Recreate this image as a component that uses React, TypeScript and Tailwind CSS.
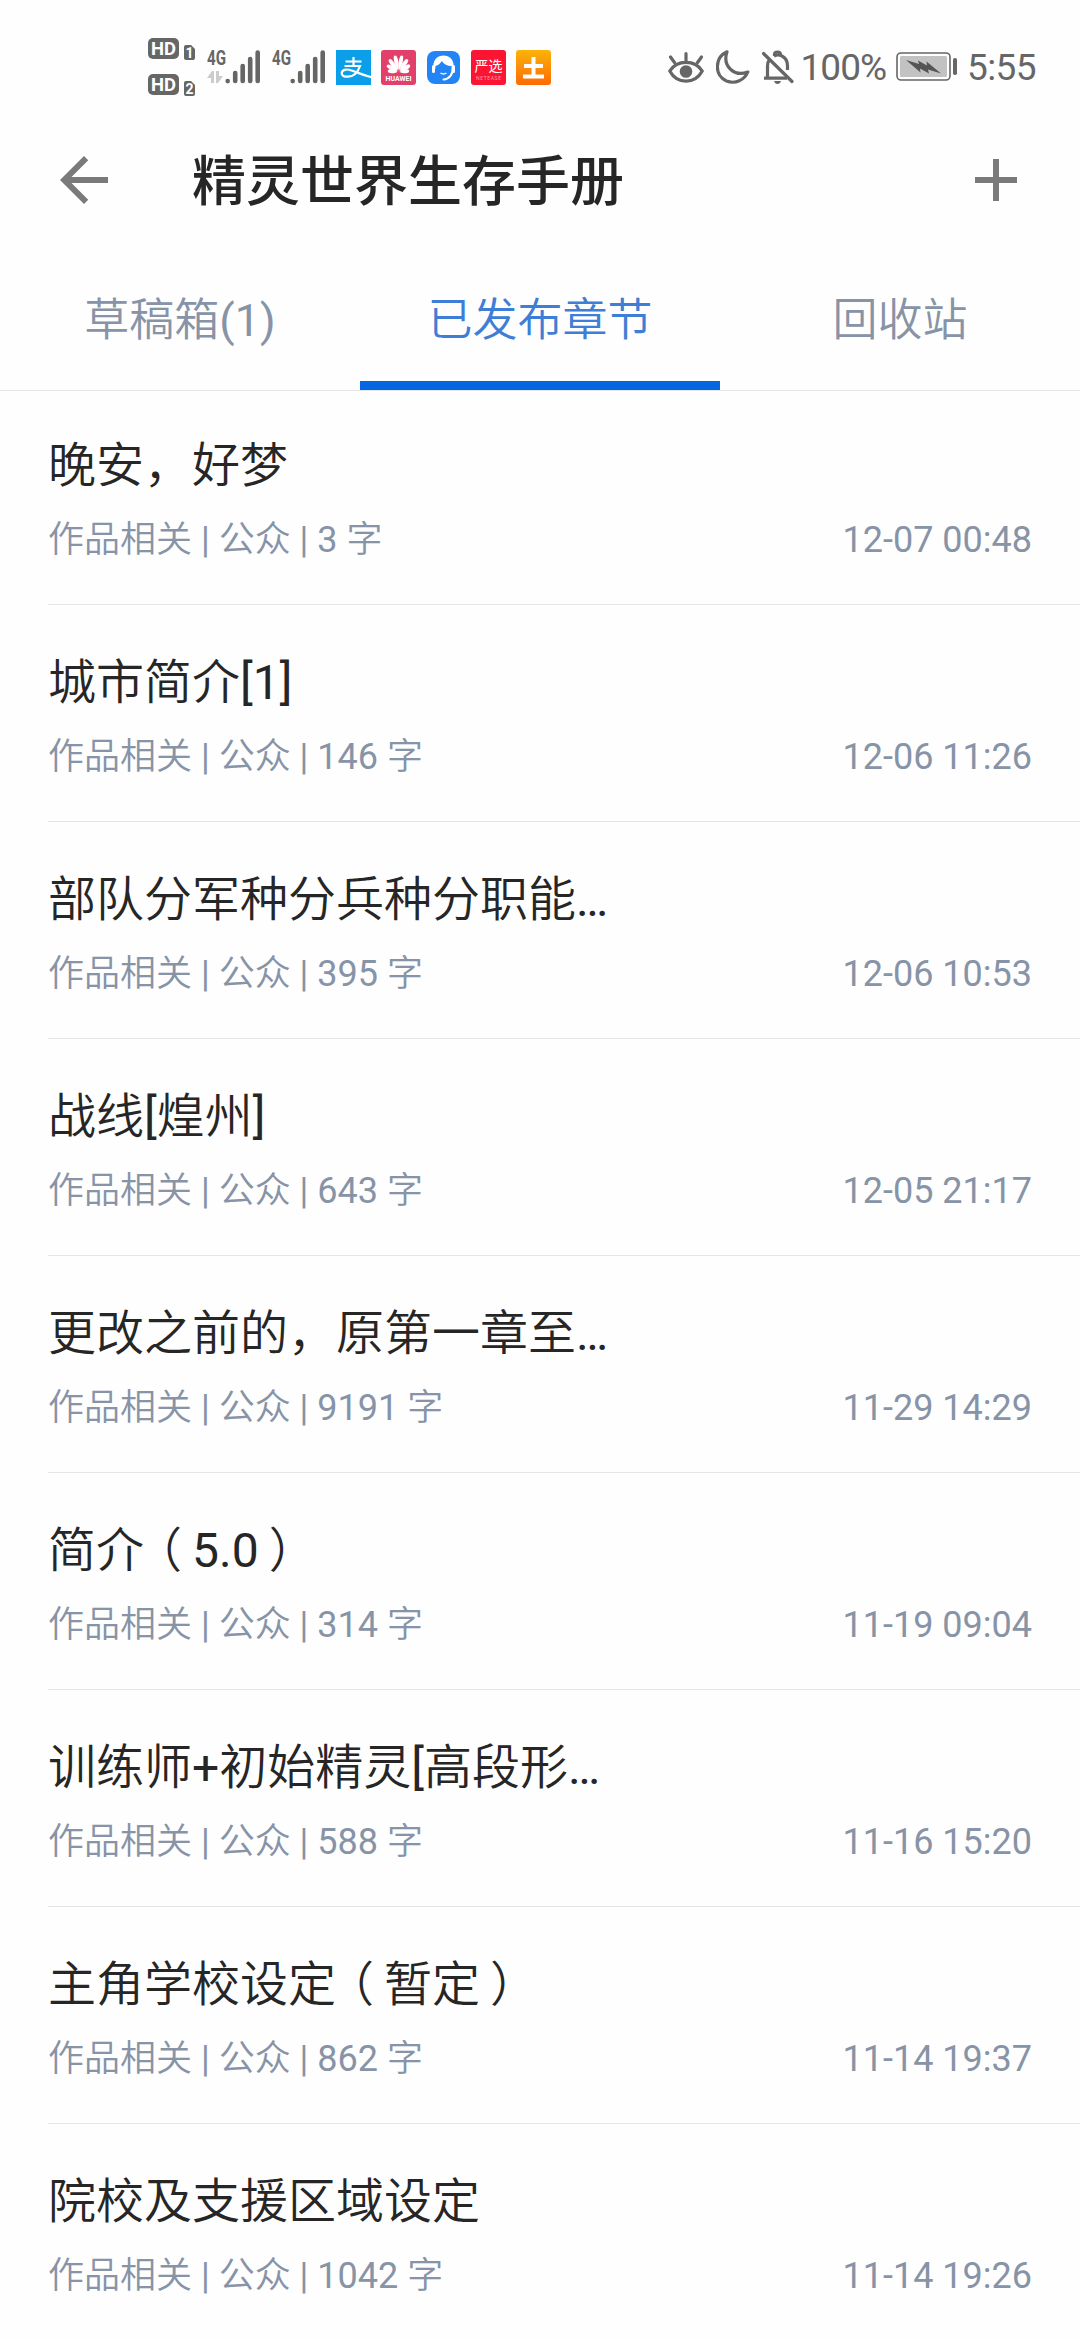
import type { ReactNode } from "react"

const chapters = [
  { title: "晚安，好梦", words: 3, date: "12-07 00:48" },
  { title: "城市简介[1]", words: 146, date: "12-06 11:26" },
  { title: "部队分军种分兵种分职能…", words: 395, date: "12-06 10:53" },
  { title: "战线[煌州]", words: 643, date: "12-05 21:17" },
  { title: "更改之前的，原第一章至…", words: 9191, date: "11-29 14:29" },
  { title: "简介（5.0）", words: 314, date: "11-19 09:04" },
  { title: "训练师+初始精灵[高段形…", words: 588, date: "11-16 15:20" },
  { title: "主角学校设定（暂定）", words: 862, date: "11-14 19:37" },
  { title: "院校及支援区域设定", words: 1042, date: "11-14 19:26" },
]

// angle and length of each petal
const petals = [[-84, 0.64], [-60, 0.8], [-36, 0.94], [-12, 1], [12, 1], [36, 0.94], [60, 0.8], [84, 0.64]]

function HdBadges() {
  return (
    <svg width="48" height="74" viewBox="0 -8 48 74" className="font-['Roboto',sans-serif] font-bold">
      {[0, 36].map((y, i) => (
        <g key={y}>
          <rect x="0" y={y} width="31" height="21" rx="5" fill="#666" />
          <text x="15.5" y={y + 17} fontSize="18" textAnchor="middle" textLength="25" lengthAdjust="spacingAndGlyphs" fill="#fff">HD</text>
          <path d={`M36 ${y + 9}q0-2 2-2h5l4 4v9q0 2-2 2h-7q-2 0-2-2z`} fill="#666" />
          <text x="41.5" y={y + 19.5} fontSize="14" textAnchor="middle" fill="#fff">{i + 1}</text>
        </g>
      ))}
    </svg>
  )
}

function Signal({ data }: { data?: boolean }) {
  return (
    <svg width="54" height="42" viewBox="0 -4 54 42" className="font-['Roboto',sans-serif] font-bold">
      <text x="0" y="15" fontSize="21" textLength="19" lengthAdjust="spacingAndGlyphs" fill="#666">4G</text>
      {data && <path d="M0 28l5-7h2v12H4v-5zM9 21h3v5h4l-5 7H9z" fill="#ccc" />}
      <g stroke="#666" strokeWidth="4.6" strokeLinecap="round">
        <path d="M20.7 31v0.1M28.2 23v8M35.7 16v15M43.2 9v22M50.7 2.6v28.4" />
      </g>
    </svg>
  )
}

function AppIcons() {
  return (
    <>
      {/* alipay */}
      <svg width="35" height="35" viewBox="0 0 35 35" className="ml-[10px]">
        <rect width="35" height="35" fill="#0a9fe8" />
        <path d="M9.500 11.500h16M17.500 7v8.500M8.500 16h15.500c-2 6-6 10.500-12 10.700-4 .2-6.300-1-6.300-3.400 0-3.600 5-4.600 9-3.100 6 2 12 4.800 20.800 7" fill="none" stroke="#fff" strokeWidth="2.200" />
      </svg>
      {/* huawei */}
      <svg width="35" height="35" viewBox="0 0 35 35" className="ml-[10px]">
        <rect width="35" height="35" rx="3" fill="#e2406a" />
        <g fill="#fff">
          {petals.map(([angle, size]) => (
            <path key={angle} d="M0-1.500C-2.200-6-3.200-12-1.700-16q1.500-1.500 3.200 0C3.200-12 2.200-6 0-1.500z" transform={`translate(17.500 22) rotate(${angle}) scale(.85 ${size})`} />
          ))}
          <text x="17.500" y="30.500" fontSize="6.500" textAnchor="middle" textLength="26" lengthAdjust="spacingAndGlyphs" className="font-['Roboto',sans-serif] font-bold">HUAWEI</text>
        </g>
      </svg>
      {/* support */}
      <svg width="33" height="33" viewBox="0 0 33 33" className="ml-[11px]">
        <rect width="33" height="33" rx="8" fill="#2384f5" />
        <path d="M8 15C7 2.500 26 2.500 25 15c-5 0-8-1.500-10-5C13 12.500 11 15 8 15z" fill="#fff" />
        <path d="M7.500 17C5.500 1.500 27.500 1.500 25.500 17c.5 6-3 11-9 11.500" fill="none" stroke="#fff" strokeWidth="2" strokeLinecap="round" />
        <path d="M6.500 15.500v5M26.500 15.500v5" stroke="#fff" strokeWidth="3" strokeLinecap="round" />
        <path d="M13.500 22q3 2 6 0" fill="none" stroke="#fff" strokeWidth="1.500" />
      </svg>
      {/* yanxuan */}
      <svg width="35" height="35" viewBox="0 0 35 35" className="ml-[11px]">
        <rect width="35" height="35" rx="3" fill="#fb1532" />
        <text x="17.500" y="21" fontSize="14" textAnchor="middle" fill="#fff" className="font-['Noto_Sans_CJK_SC',sans-serif]">严选</text>
        <text x="17.500" y="30" fontSize="5" textAnchor="middle" textLength="25" fill="#ff9aa6" className="font-['Roboto',sans-serif]">NETEASE</text>
      </svg>
      <svg width="35" height="35" viewBox="0 0 35 35" className="ml-[10px]">
        <defs>
          <linearGradient id="tu" x1="0" y1="0" x2="0" y2="1">
            <stop offset="0" stopColor="#fbb40a" />
            <stop offset="1" stopColor="#fd6a03" />
          </linearGradient>
        </defs>
        <rect width="35" height="35" rx="3" fill="url(#tu)" />
        <path d="M15.500 7h4v7H27v4h-7.500v6.500H28v4H7v-4h8.500V18H8v-4h7.500z" fill="#fff" />
      </svg>
    </>
  )
}

function StatusBar() {
  return (
    <div className="flex h-[134px] items-center pl-[148px] pr-[44px] text-[#666]">
      <HdBadges />
      <div className="ml-[11px] flex gap-[11px]">
        <Signal data />
        <Signal />
      </div>
      <AppIcons />

      <div className="ml-auto flex items-center">
        <svg width="36" height="33" viewBox="0 0 36 33" fill="none" stroke="#666" strokeWidth="3.2" strokeLinecap="round">
          <path d="M1.800 20C9 8.500 27 8.500 34.200 20C27 33.500 9 33.500 1.800 20z" />
          <path d="M18 2.500v7M2.500 6l4 5.500M33.500 6l-4 5.500" />
          <circle cx="18" cy="20.5" r="6.3" fill="#666" stroke="none" />
        </svg>
        <svg width="34" height="34" viewBox="0 0 34 34" className="ml-[12px]" fill="none" stroke="#666" strokeWidth="3.2" strokeLinejoin="round">
          <path d="M11 1.800C-2 8-1.500 26 10.500 31c9 3.500 18-1 21.300-9C19 27 6 17 11 1.800z" />
        </svg>
        <svg width="32" height="34" viewBox="0 0 32 34" className="ml-[12px]" fill="none" stroke="#666" strokeWidth="3.2">
          <path d="M1.500 3.500L30 31.500" strokeLinecap="round" />
          <path d="M2 28.200h23M5.500 28V16c0-3 .8-5 2-6.500M12 6q4-2 8 0c4 2 5.500 5.500 5.500 10v4M12.500 6V4.500q0-2.500 3-2.500t3 2.500V6" />
          <path d="M12 31h7q-1 3-3.500 3T12 31z" fill="#666" stroke="none" />
        </svg>
        <span className="ml-[7px] text-[37px] leading-none tracking-[-1px]">100%</span>
        <svg width="62" height="30" viewBox="0 0 62 30" className="ml-[10px]">
          <rect x="1" y="1" width="53" height="27" rx="4" fill="none" stroke="#666" strokeWidth="1.6" />
          <rect x="4" y="4" width="47" height="21" rx="1.5" fill="#c2c2c2" />
          <path d="M10 8l13 4-1-3.500 9 5-.5-4L45 21.500 32 17.500l1 4-9-5 .5 4z" fill="#555" />
          <rect x="57" y="6" width="4" height="17" rx="1.8" fill="#666" />
        </svg>
        <span className="ml-[9px] text-[37px] leading-none tracking-[-0.6px]">5:55</span>
      </div>
    </div>
  )
}

function Tab({ active, children }: { active?: boolean; children: ReactNode }) {
  return (
    <div className={active
      ? "flex h-[164px] w-[360px] items-center justify-center border-b-[9px] border-[#0566e2] pt-[33px] text-[#3f7ed6]"
      : "flex h-[164px] w-[360px] items-center justify-center pt-[24px] text-[#8793a6]"
    }>
      {children}
    </div>
  )
}

// hanzi are set thinner than latin, full-width brackets sit near the middle of their cell
function Mixed({ text }: { text: string }) {
  return (
    <>
      {text.split(/([\x20-\x7e…]+|（|）)/).map((part, i) => {
        if (part === "（") return <span key={i} className="pl-[14px] pr-[10px] [font-feature-settings:'halt']">{part}</span>
        if (part === "）") return <span key={i} className="pl-[10px] pr-[14px] [font-feature-settings:'halt']">{part}</span>
        return i % 2 ? <span key={i} className="font-normal">{part}</span> : part
      })}
    </>
  )
}

export default function App() {
  return (
    <div className="h-[2340px] w-[1080px] overflow-hidden bg-[#fefefe] font-['Roboto','Noto_Sans_CJK_SC',sans-serif]">
      <StatusBar />

      {/* title bar */}
      <div className="flex h-[92px] items-center px-[48px]">
        <svg width="72" height="72" viewBox="0 0 24 24" fill="#7a7a7a">
          <path d="M20 11H7.830l5.590-5.590L12 4l-8 8 8 8 1.410-1.410L7.830 13H20z" />
        </svg>
        <h1 className="ml-[72px] pt-[6px] text-[54px] font-medium leading-none text-[#262626]">精灵世界生存手册</h1>
        <svg width="72" height="72" viewBox="0 0 24 24" fill="#7a7a7a" className="ml-auto">
          <path d="M19 13h-6v6h-2v-6H5v-2h6V5h2v6h6z" />
        </svg>
      </div>

      {/* tabs */}
      <div className="flex border-b border-[#e5e5e5] text-[45px] font-[350] leading-none">
        <Tab><span><Mixed text="草稿箱(1)" /></span></Tab>
        <Tab active>已发布章节</Tab>
        <Tab>回收站</Tab>
      </div>

      {/* chapter list */}
      <ul>
        {chapters.map((c) => (
          <li key={c.date} className="ml-[48px] flex h-[217px] flex-col justify-end border-b border-[#e5e5e5] pb-[40px] pr-[48px] font-[350] first:h-[214px]">
            <h2 className="whitespace-nowrap text-[48px] leading-[56px] text-[#262626]"><Mixed text={c.title} /></h2>
            <div className="mt-[22px] flex justify-between text-[36px] leading-[48px] text-[#8793a6]">
              <span><Mixed text={`作品相关 | 公众 | ${c.words} 字`} /></span>
              <span className="font-normal">{c.date}</span>
            </div>
          </li>
        ))}
      </ul>
    </div>
  )
}
